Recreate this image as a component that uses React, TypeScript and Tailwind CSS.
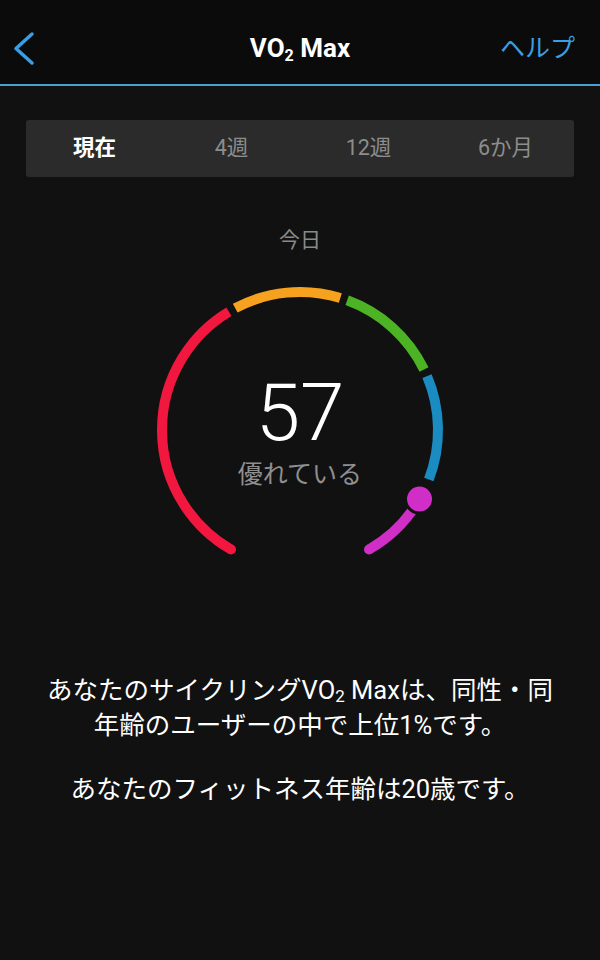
import React from "react";

const CX = 160;
const CY = 158;
const R = 138;

function pt(deg: number, r: number = R) {
  const a = (deg * Math.PI) / 180;
  return { x: CX + r * Math.sin(a), y: CY - r * Math.cos(a) };
}

function arc(from: number, to: number) {
  const s = pt(from);
  const e = pt(to);
  const large = to - from > 180 ? 1 : 0;
  return `M ${s.x.toFixed(2)} ${s.y.toFixed(2)} A ${R} ${R} 0 ${large} 1 ${e.x.toFixed(2)} ${e.y.toFixed(2)}`;
}

const segments = [
  { from: -150, to: -31, color: "#f2173f" },
  { from: -28, to: 17, color: "#f7a21e" },
  { from: 20, to: 64, color: "#4cb424" },
  { from: 67, to: 111, color: "#1b8cc1" },
  { from: 114, to: 150, color: "#d02ec7" },
];

function Gauge() {
  const start = pt(-150);
  const end = pt(150);
  const marker = pt(120);
  return (
    <svg width="320" height="300" viewBox="0 0 320 300" className="absolute inset-0">
      {segments.map((s) => (
        <path key={s.from} d={arc(s.from, s.to)} fill="none" stroke={s.color} strokeWidth="10" strokeLinecap="butt" />
      ))}
      <circle cx={start.x} cy={start.y} r="5" fill="#f2173f" />
      <circle cx={end.x} cy={end.y} r="5" fill="#d02ec7" />
      <circle cx={marker.x} cy={marker.y} r="14" fill="#d02ec7" stroke="#111111" strokeWidth="3" />
    </svg>
  );
}

export default function App() {
  const tabs = ["現在", "4週", "12週", "6か月"];
  return (
    <div
      className="w-[600px] h-[960px] bg-[#111111] text-white"
      style={{ fontFamily: 'Roboto, "Noto Sans CJK JP", sans-serif' }}
    >
      <header className="h-[84px] bg-[#0b0b0b] pt-[12px] grid grid-cols-[1fr_auto_1fr] items-center">
        <svg width="30" height="36" viewBox="0 0 30 36" className="ml-[10px]">
          <path d="M22 4 L6 18.5 L22 33" fill="none" stroke="#3a9fe2" strokeWidth="3.5" strokeLinecap="round" strokeLinejoin="round" />
        </svg>
        <h1 className="text-center text-[26px] font-bold leading-none">
          VO<span className="text-[16px] relative top-[4px]">2</span> Max
        </h1>
        <span className="text-right text-[25px] text-[#3a9fe2] pr-[25px] leading-none">ヘルプ</span>
      </header>
      <div className="h-[2px] bg-[#4a9fd2]" />

      <div className="px-[26px] pt-[34px]">
        <div className="h-[57px] bg-[#2b2b2b] rounded-[3px] grid grid-cols-4 items-center text-[21.5px]">
          {tabs.map((t, i) => (
            <div key={t} className={i === 0 ? "text-center font-bold text-white" : "text-center text-[#8d8d8d]"}>
              {t}
            </div>
          ))}
        </div>
      </div>

      <div className="text-center text-[21px] text-[#8a8a8a] mt-[49px] leading-[28px]">今日</div>

      <div className="relative w-[320px] h-[300px] mx-auto mt-[18px]">
        <Gauge />
        <div className="absolute inset-0 flex flex-col items-center pt-[101px]">
          <div className="text-[80px] font-light leading-[80px] text-white">57</div>
          <div className="text-[25px] leading-[32px] text-[#8f8f8f] mt-[6px]">優れている</div>
        </div>
      </div>

      <div className="mt-[102px] text-center text-[25.5px] leading-[32px] text-white">
        <p>
          あなたのサイクリングVO<span className="text-[17px] relative top-[3px]">2</span> Maxは、同性・同
          <br />
          年齢のユーザーの中で上位1%です。
        </p>
        <p className="mt-[32px]">あなたのフィットネス年齢は20歳です。</p>
      </div>
    </div>
  );
}
